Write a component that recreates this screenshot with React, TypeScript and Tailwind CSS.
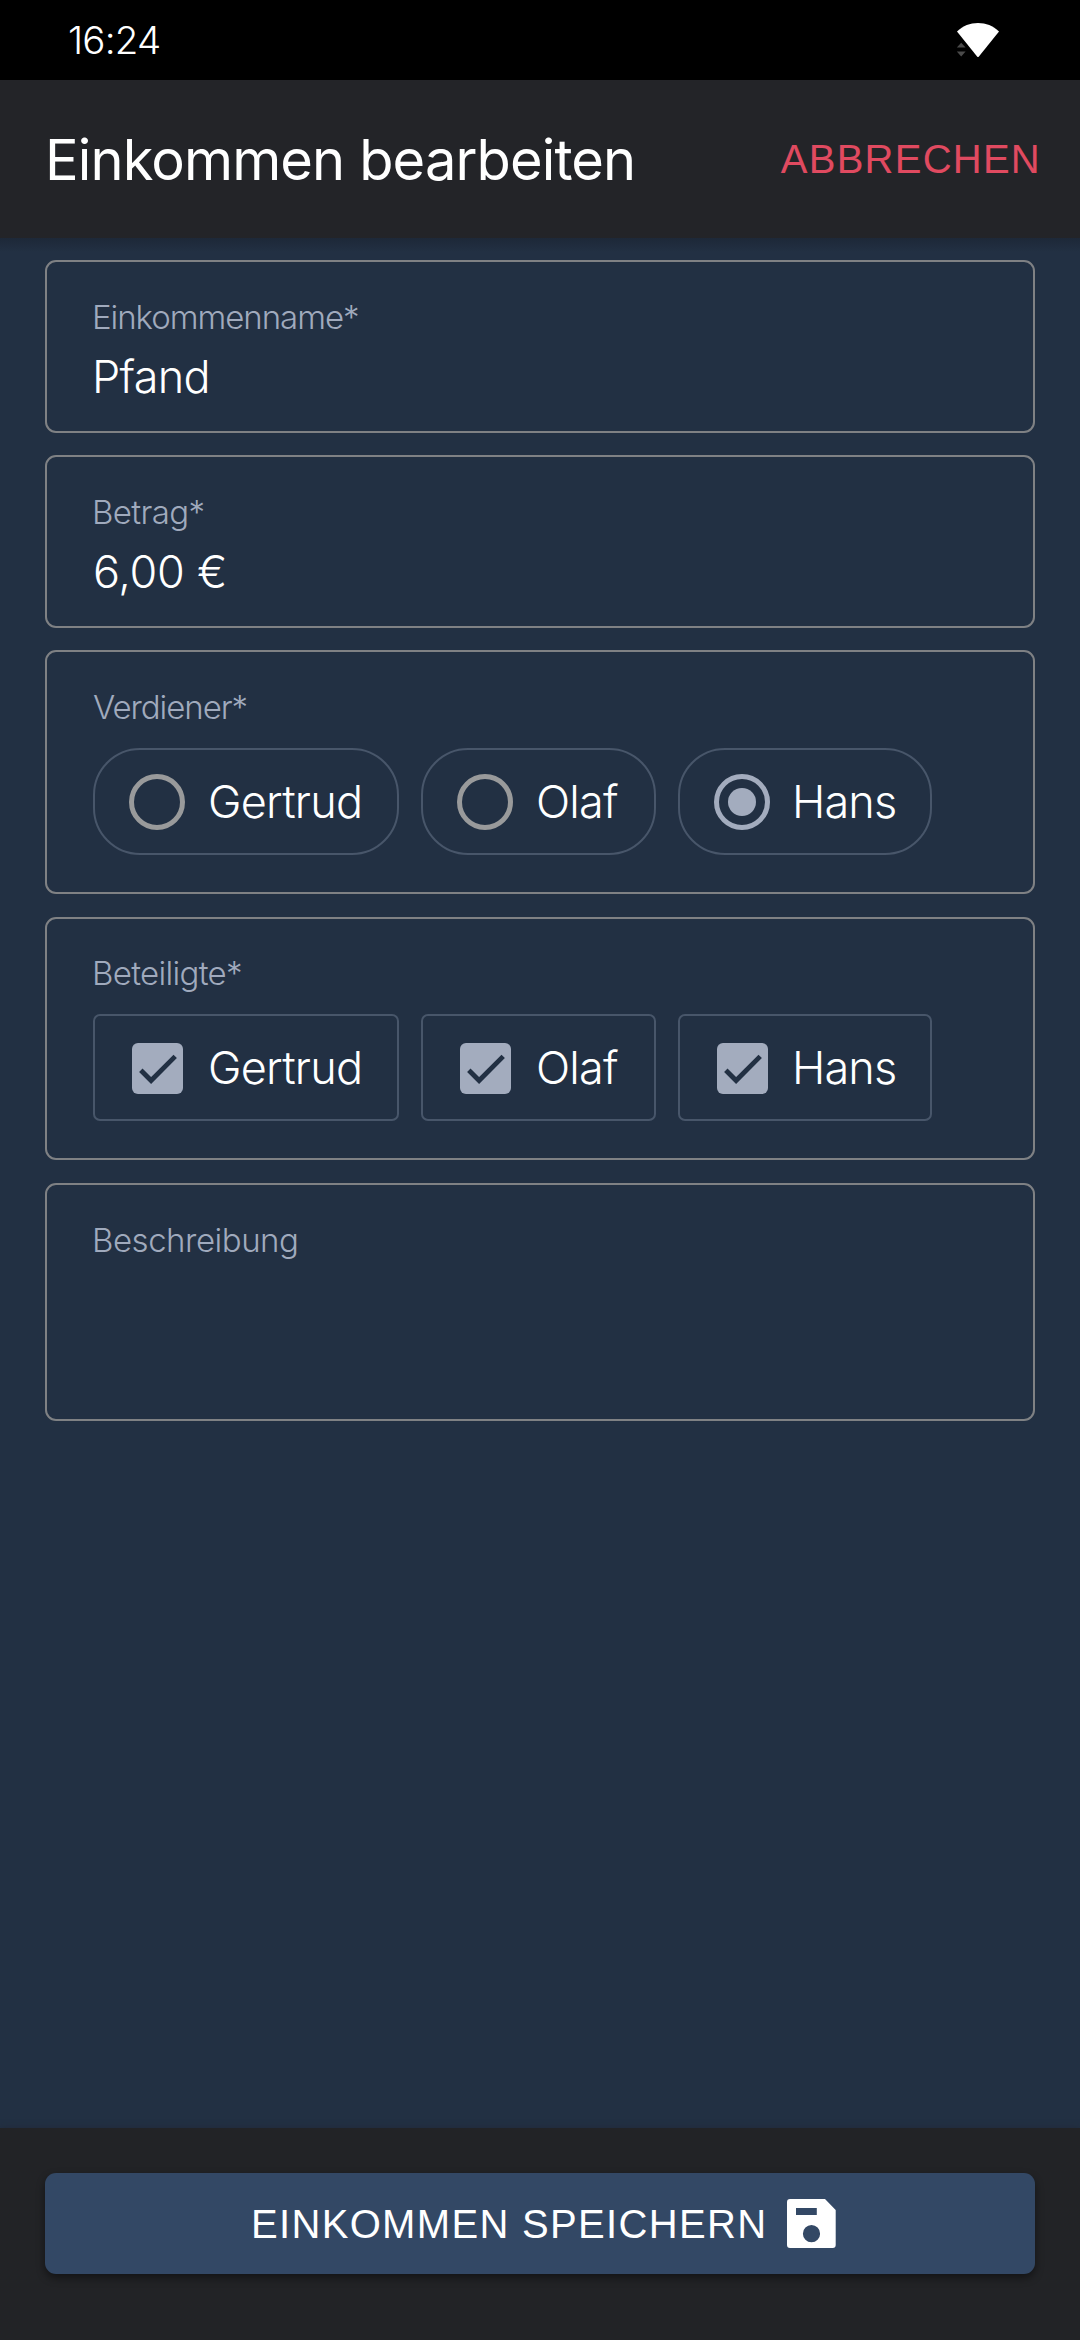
import type { ReactNode } from "react";

function WifiIcon() {
  return (
    <svg className="h-[36px] w-[44px]" viewBox="0 0 44 36" aria-hidden="true">
      <path d="M1 9.500C7 3.800 14 1 22 1S37 3.800 43 9.500L22.900 34.400q-.9 1-1.800 0Z" fill="#fff" />
      <path d="M5.200 20.800l4.400 4.700H.8ZM5.200 34.400l4.400-5H.8Z" fill="#4a4a4a" />
    </svg>
  );
}

function SaveIcon() {
  return (
    <svg className="h-[49px] w-[49px] shrink-0" viewBox="0 0 49 49" aria-hidden="true">
      <path
        fill="#fff"
        fillRule="evenodd"
        d="M3 0H38L48.700 11V46a3 3 0 0 1-3 3H3a3 3 0 0 1-3-3V3a3 3 0 0 1 3-3ZM9 9V16H29.800V9ZM24.500 26.100a8.600 8.600 0 1 0 0 17.200 8.600 8.600 0 0 0 0-17.200Z"
      />
    </svg>
  );
}

function RadioMark({ checked }: { checked: boolean }) {
  const color = checked ? "#a3acbe" : "#999a9b";
  return (
    <svg className="h-[56px] w-[56px] shrink-0" viewBox="0 0 56 56" aria-hidden="true">
      <circle cx="28" cy="28" r="25.500" fill="none" stroke={color} strokeWidth="5" />
      {checked && <circle cx="28" cy="28" r="14" fill={color} />}
    </svg>
  );
}

function CheckMark() {
  return (
    <svg className="h-[56px] w-[56px] shrink-0" viewBox="0 0 56 56" aria-hidden="true">
      <rect x="3" y="3" width="51" height="51" rx="6" fill="#a3acbe" />
      <path d="M11.800 30.200L22.100 40.500L46.200 16.400" fill="none" stroke="#223043" strokeWidth="4.800" />
    </svg>
  );
}

function Card({ label, spacing, className, children }: { label: string; spacing: string; className: string; children?: ReactNode }) {
  return (
    <section className={`rounded-[11px] border-2 border-[#7f8184] pl-[46px] ${className}`}>
      <div className={`text-[33px] leading-[34px] text-[#a0aabd] ${spacing}`}>{label}</div>
      {children}
    </section>
  );
}

const people = [
  { name: "Gertrud", width: "w-[306px]", text: "tracking-[-0.75px]", selected: false },
  { name: "Olaf", width: "w-[235px]", text: "tracking-[-0.79px]", selected: false },
  { name: "Hans", width: "w-[254px]", text: "tracking-[-0.84px] -ml-px", selected: true },
];

function Chips({ kind }: { kind: "radio" | "checkbox" }) {
  return (
    <div className="mt-[24px] flex gap-[22px]">
      {people.map((p) => (
        <label
          key={p.name}
          className={`flex h-[107px] items-center gap-[23px] border-2 border-[#48566a] pl-[34px] text-[45px] leading-[54px] text-white ${p.width} ${kind === "radio" ? "rounded-[47px]" : "rounded-[7px]"}`}
        >
          {kind === "radio" ? <RadioMark checked={p.selected} /> : <CheckMark />}
          <span className={p.text}>{p.name}</span>
        </label>
      ))}
    </div>
  );
}

export default function App() {
  return (
    <div className="flex h-[2340px] w-[1080px] flex-col bg-[#223043] font-['Inter',sans-serif] font-light">
      <div className="flex h-[80px] shrink-0 items-center justify-between bg-black pr-[80px] pl-[68px] text-white">
        <span className="text-[38.5px] leading-[46px] tracking-[-0.8px]">16:24</span>
        <WifiIcon />
      </div>

      <header className="flex h-[158px] shrink-0 items-center justify-between bg-[#232428] pr-[39px] pl-[45px] font-normal">
        <h1 className="pt-[2px] text-[56px] leading-[68px] tracking-[-0.88px] text-white">Einkommen bearbeiten</h1>
        <button className="font-['Liberation_Sans',sans-serif] text-[40px] leading-[46px] tracking-[1.25px] text-[#e04a60]">
          ABBRECHEN
        </button>
      </header>
      <div className="h-[14px] shrink-0 bg-linear-to-b from-[#1d2838] to-[#223043]" />

      <main className="flex grow flex-col px-[45px] pt-[8px]">
        <Card label="Einkommenname*" spacing="-ml-px tracking-[-1.05px]" className="h-[173px] pt-[38px]">
          <div className="mt-[16px] -ml-px text-[45px] leading-[54px] tracking-[-0.7px] text-white">Pfand</div>
        </Card>
        <Card label="Betrag*" spacing="-ml-px tracking-[-0.63px]" className="mt-[22px] h-[173px] pt-[38px]">
          <div className="mt-[16px] text-[45px] leading-[54px] tracking-[-0.27px] text-white">6,00 €</div>
        </Card>
        <Card label="Verdiener*" spacing="tracking-[-1.06px]" className="mt-[22px] h-[244px] pt-[38px]">
          <Chips kind="radio" />
        </Card>
        <Card label="Beteiligte*" spacing="-ml-px tracking-[-0.69px]" className="mt-[23px] h-[243px] pt-[37px]">
          <Chips kind="checkbox" />
        </Card>
        <Card label="Beschreibung" spacing="-ml-px tracking-[-0.48px]" className="mt-[23px] h-[238px] pt-[38px]" />
      </main>

      <footer className="h-[212px] shrink-0 bg-[#222326] px-[45px] pt-[45px] shadow-[0_0_6px_rgba(32,36,48,0.5)]">
        <button className="flex h-[101px] w-full items-center rounded-[11px] bg-[#334865] pl-[206px] font-normal text-white shadow-[0_4px_9px_rgba(0,0,0,0.45)]">
          <span className="w-[536px] text-left font-['Liberation_Sans',sans-serif] text-[40px] leading-[46px] tracking-[1.33px] whitespace-nowrap">
            EINKOMMEN SPEICHERN
          </span>
          <SaveIcon />
        </button>
      </footer>
    </div>
  );
}
